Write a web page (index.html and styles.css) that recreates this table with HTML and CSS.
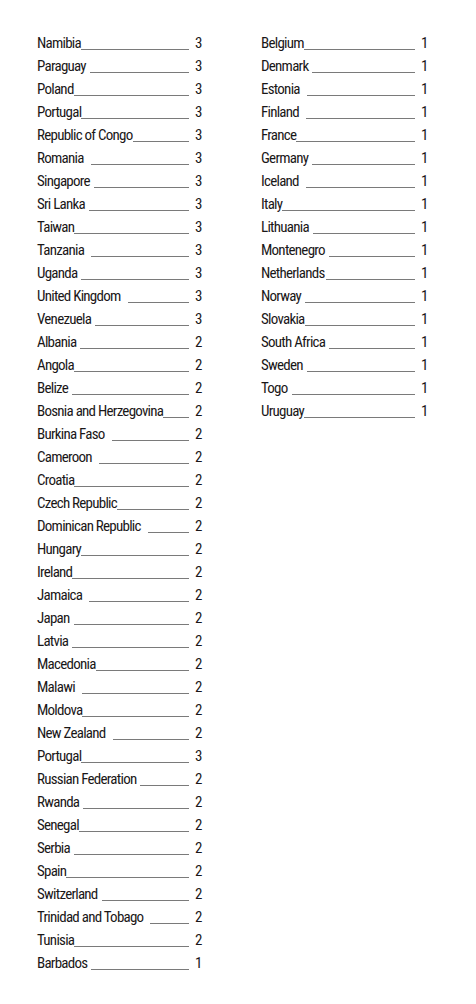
FILE: index.html
```html
<!DOCTYPE html>
<html lang="en">
<head>
<meta charset="utf-8">
<title>Countries</title>
<link rel="stylesheet" href="styles.css">
</head>
<body>
<main class="page">
  <ul class="col col-left">
    <li class="row"><span class="name">Namibia</span><span class="fill"></span><span class="num">3</span></li>
    <li class="row"><span class="name">Paraguay</span><span class="fill g1"></span><span class="num">3</span></li>
    <li class="row"><span class="name">Poland</span><span class="fill"></span><span class="num">3</span></li>
    <li class="row"><span class="name">Portugal</span><span class="fill"></span><span class="num">3</span></li>
    <li class="row"><span class="name">Republic of Congo</span><span class="fill"></span><span class="num">3</span></li>
    <li class="row"><span class="name">Romania</span><span class="fill g2"></span><span class="num">3</span></li>
    <li class="row"><span class="name">Singapore</span><span class="fill g1"></span><span class="num">3</span></li>
    <li class="row"><span class="name">Sri Lanka</span><span class="fill g1"></span><span class="num">3</span></li>
    <li class="row"><span class="name">Taiwan</span><span class="fill"></span><span class="num">3</span></li>
    <li class="row"><span class="name">Tanzania</span><span class="fill g2"></span><span class="num">3</span></li>
    <li class="row"><span class="name">Uganda</span><span class="fill g1"></span><span class="num">3</span></li>
    <li class="row"><span class="name">United Kingdom</span><span class="fill g2"></span><span class="num">3</span></li>
    <li class="row"><span class="name">Venezuela</span><span class="fill g1"></span><span class="num">3</span></li>
    <li class="row"><span class="name">Albania</span><span class="fill g1"></span><span class="num">2</span></li>
    <li class="row"><span class="name">Angola</span><span class="fill"></span><span class="num">2</span></li>
    <li class="row"><span class="name">Belize</span><span class="fill g1"></span><span class="num">2</span></li>
    <li class="row"><span class="name">Bosnia and Herzegovina</span><span class="fill"></span><span class="num">2</span></li>
    <li class="row"><span class="name">Burkina Faso</span><span class="fill g2"></span><span class="num">2</span></li>
    <li class="row"><span class="name">Cameroon</span><span class="fill g2"></span><span class="num">2</span></li>
    <li class="row"><span class="name">Croatia</span><span class="fill"></span><span class="num">2</span></li>
    <li class="row"><span class="name">Czech Republic</span><span class="fill"></span><span class="num">2</span></li>
    <li class="row"><span class="name">Dominican Republic</span><span class="fill g2"></span><span class="num">2</span></li>
    <li class="row"><span class="name">Hungary</span><span class="fill"></span><span class="num">2</span></li>
    <li class="row"><span class="name">Ireland</span><span class="fill"></span><span class="num">2</span></li>
    <li class="row"><span class="name">Jamaica</span><span class="fill g2"></span><span class="num">2</span></li>
    <li class="row"><span class="name">Japan</span><span class="fill g1"></span><span class="num">2</span></li>
    <li class="row"><span class="name">Latvia</span><span class="fill g1"></span><span class="num">2</span></li>
    <li class="row"><span class="name">Macedonia</span><span class="fill"></span><span class="num">2</span></li>
    <li class="row"><span class="name">Malawi</span><span class="fill g2"></span><span class="num">2</span></li>
    <li class="row"><span class="name">Moldova</span><span class="fill"></span><span class="num">2</span></li>
    <li class="row"><span class="name">New Zealand</span><span class="fill g2"></span><span class="num">2</span></li>
    <li class="row"><span class="name">Portugal</span><span class="fill"></span><span class="num">3</span></li>
    <li class="row"><span class="name">Russian Federation</span><span class="fill g1"></span><span class="num">2</span></li>
    <li class="row"><span class="name">Rwanda</span><span class="fill g1"></span><span class="num">2</span></li>
    <li class="row"><span class="name">Senegal</span><span class="fill"></span><span class="num">2</span></li>
    <li class="row"><span class="name">Serbia</span><span class="fill g1"></span><span class="num">2</span></li>
    <li class="row"><span class="name">Spain</span><span class="fill"></span><span class="num">2</span></li>
    <li class="row"><span class="name">Switzerland</span><span class="fill g1"></span><span class="num">2</span></li>
    <li class="row"><span class="name">Trinidad and Tobago</span><span class="fill g2"></span><span class="num">2</span></li>
    <li class="row"><span class="name">Tunisia</span><span class="fill"></span><span class="num">2</span></li>
    <li class="row"><span class="name">Barbados</span><span class="fill g1"></span><span class="num">1</span></li>
  </ul>
  <ul class="col col-right">
    <li class="row"><span class="name">Belgium</span><span class="fill"></span><span class="num">1</span></li>
    <li class="row"><span class="name">Denmark</span><span class="fill g1"></span><span class="num">1</span></li>
    <li class="row"><span class="name">Estonia</span><span class="fill g2"></span><span class="num">1</span></li>
    <li class="row"><span class="name">Finland</span><span class="fill g2"></span><span class="num">1</span></li>
    <li class="row"><span class="name">France</span><span class="fill"></span><span class="num">1</span></li>
    <li class="row"><span class="name">Germany</span><span class="fill g1"></span><span class="num">1</span></li>
    <li class="row"><span class="name">Iceland</span><span class="fill g2"></span><span class="num">1</span></li>
    <li class="row"><span class="name">Italy</span><span class="fill"></span><span class="num">1</span></li>
    <li class="row"><span class="name">Lithuania</span><span class="fill g1"></span><span class="num">1</span></li>
    <li class="row"><span class="name">Montenegro</span><span class="fill g1"></span><span class="num">1</span></li>
    <li class="row"><span class="name">Netherlands</span><span class="fill g0"></span><span class="num">1</span></li>
    <li class="row"><span class="name">Norway</span><span class="fill g1"></span><span class="num">1</span></li>
    <li class="row"><span class="name">Slovakia</span><span class="fill"></span><span class="num">1</span></li>
    <li class="row"><span class="name">South Africa</span><span class="fill g1"></span><span class="num">1</span></li>
    <li class="row"><span class="name">Sweden</span><span class="fill g1"></span><span class="num">1</span></li>
    <li class="row"><span class="name">Togo</span><span class="fill g1"></span><span class="num">1</span></li>
    <li class="row"><span class="name">Uruguay</span><span class="fill"></span><span class="num">1</span></li>
  </ul>
</main>
</body>
</html>
```

FILE: styles.css
```css
html, body {
  margin: 0;
  padding: 0;
  background: #ffffff;
}

.page {
  display: grid;
  grid-template-columns: 166px 168px;
  column-gap: 58px;
  align-items: start;
  padding: 32px 0 0 37px;
  font-family: Roboto, "Liberation Sans", Arial, sans-serif;
  font-stretch: 75%;
  font-size: 15px;
  letter-spacing: -0.75px;
  color: #1a1718;
}

.col {
  list-style: none;
  margin: 0;
  padding: 0;
}

.row {
  display: flex;
  align-items: baseline;
  height: 23px;
  line-height: 23px;
}

.name {
  white-space: nowrap;
}

.fill {
  flex: 1;
  align-self: flex-end;
  margin-bottom: 5px;
  border-bottom: 1px solid #7a7a7a;
}

.fill.g0 { margin-left: 1px; }
.fill.g1 { margin-left: 4px; }
.fill.g2 { margin-left: 7px; }

.num {
  margin-left: 6px;
  width: 8px;
  letter-spacing: 0;
}
```
